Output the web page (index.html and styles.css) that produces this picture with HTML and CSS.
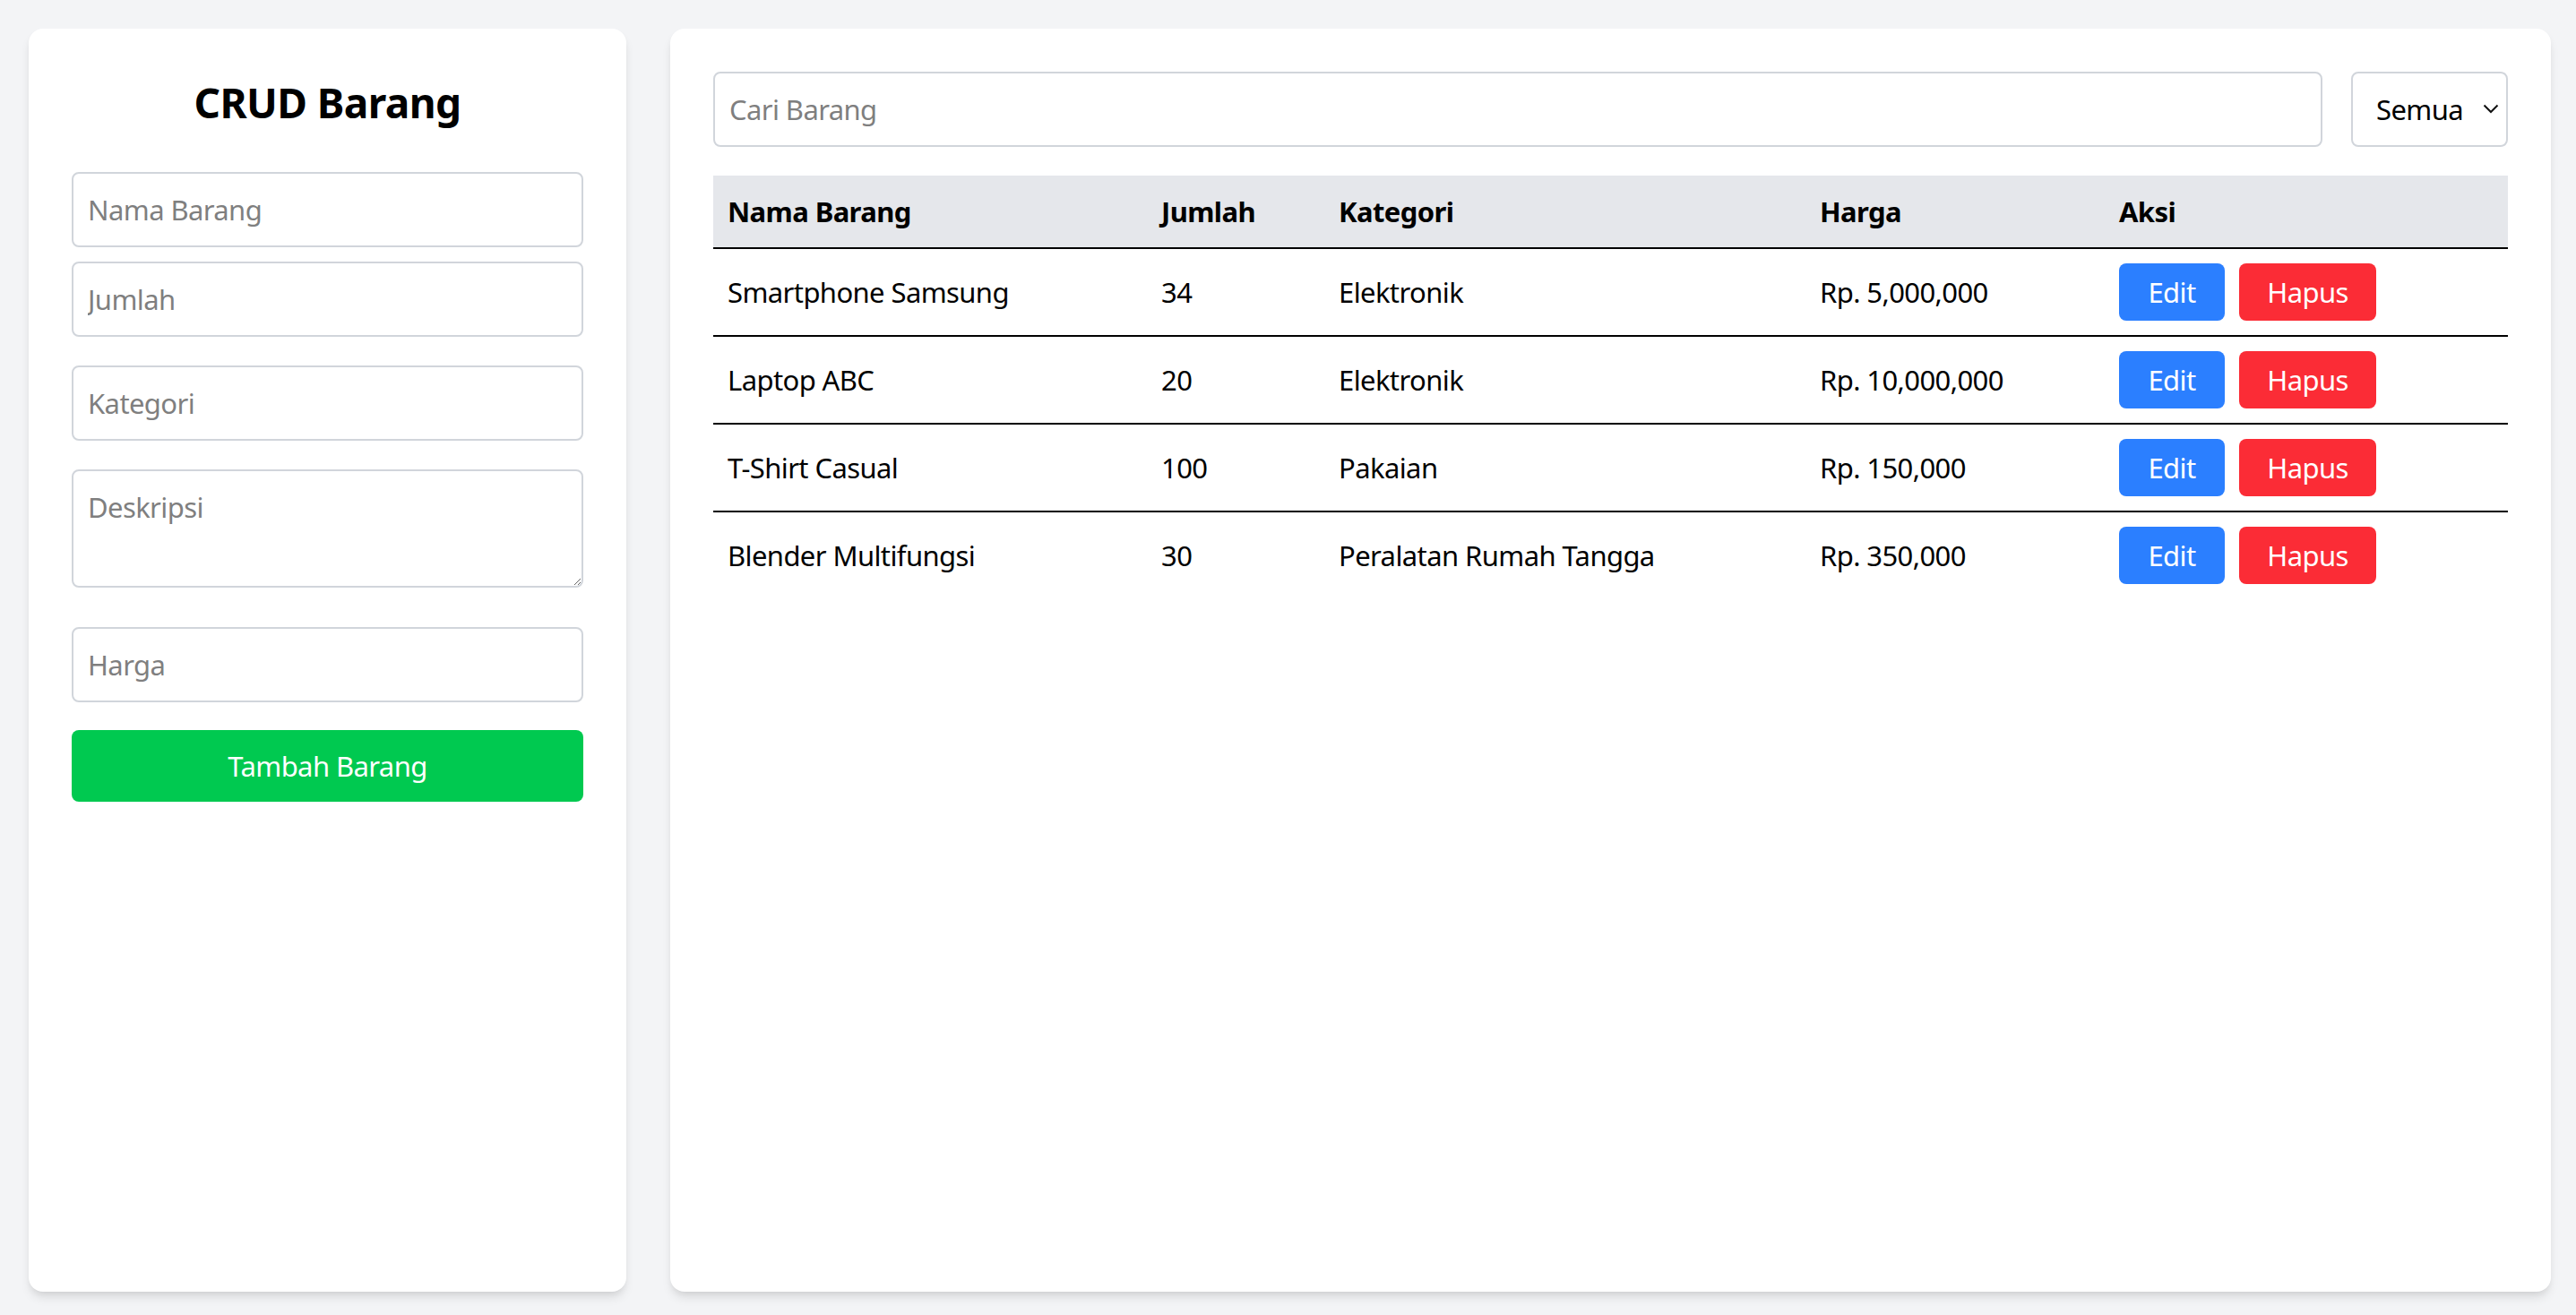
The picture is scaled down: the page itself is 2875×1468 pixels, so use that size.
FILE: index.html
```html
<!DOCTYPE html>
<html lang="id">
<head>
<meta charset="utf-8">
<title>CRUD Barang</title>
<link rel="stylesheet" href="styles.css">
</head>
<body>
<div class="layout">
  <aside class="card form-card">
    <h1 class="title">CRUD Barang</h1>
    <input class="field f-nama" type="text" placeholder="Nama Barang">
    <input class="field f-jumlah" type="number" placeholder="Jumlah">
    <input class="field f-kategori" type="text" placeholder="Kategori">
    <textarea class="field f-desk" rows="2" placeholder="Deskripsi"></textarea>
    <input class="field f-harga" type="number" placeholder="Harga">
    <button class="btn-add" type="button">Tambah Barang</button>
  </aside>
  <main class="card list-card">
    <div class="toolbar">
      <input class="field search" type="text" placeholder="Cari Barang">
      <div class="select-wrap">
        <select class="field select">
          <option>Semua</option>
          <option>Elektronik</option>
          <option>Pakaian</option>
          <option>Peralatan Rumah Tangga</option>
        </select>
        <svg class="chev" width="18" height="11" viewBox="0 0 18 11"><path d="M1.5 1.5 L9 9 L16.5 1.5" fill="none" stroke="#111" stroke-width="2"/></svg>
      </div>
    </div>
    <table class="tbl">
      <colgroup>
        <col class="c1"><col class="c2"><col class="c3"><col class="c4"><col class="c5">
      </colgroup>
      <thead>
        <tr><th>Nama Barang</th><th>Jumlah</th><th>Kategori</th><th>Harga</th><th>Aksi</th></tr>
      </thead>
      <tbody>
        <tr><td>Smartphone Samsung</td><td>34</td><td>Elektronik</td><td>Rp. 5,000,000</td><td><div class="actions"><button class="btn edit">Edit</button><button class="btn del">Hapus</button></div></td></tr>
        <tr><td>Laptop ABC</td><td>20</td><td>Elektronik</td><td>Rp. 10,000,000</td><td><div class="actions"><button class="btn edit">Edit</button><button class="btn del">Hapus</button></div></td></tr>
        <tr><td>T-Shirt Casual</td><td>100</td><td>Pakaian</td><td>Rp. 150,000</td><td><div class="actions"><button class="btn edit">Edit</button><button class="btn del">Hapus</button></div></td></tr>
        <tr><td>Blender Multifungsi</td><td>30</td><td>Peralatan Rumah Tangga</td><td>Rp. 350,000</td><td><div class="actions"><button class="btn edit">Edit</button><button class="btn del">Hapus</button></div></td></tr>
      </tbody>
    </table>
  </main>
</div>
</body>
</html>
```

FILE: styles.css
```css
* { box-sizing: border-box; }
html, body { margin: 0; padding: 0; }
body {
  background: #f3f4f6;
  font-family: "Noto Sans", "Open Sans", "Liberation Sans", sans-serif;
  font-size: 31px;
  letter-spacing: -0.6px;
  line-height: 48px;
  color: #000;
}
.layout {
  display: flex;
  gap: 49px;
  height: 100vh;
  padding: 32px 28px 26px 32px;
}
.card {
  background: #fff;
  border-radius: 16px;
  box-shadow: 0 8px 12px -2px rgba(0,0,0,0.1), 0 4px 8px -4px rgba(0,0,0,0.1);
  padding: 48px;
}
.form-card { width: 667px; flex: none; }
.list-card { flex: 1; min-width: 0; }
.title {
  margin: 0 0 48px;
  padding-top: 2px;
  height: 64px;
  font-size: 46px;
  letter-spacing: -0.6px;
  line-height: 64px;
  font-weight: 700;
  text-align: center;
}
.field {
  display: block;
  width: 100%;
  font: inherit;
  letter-spacing: inherit;
  color: #000;
  background: #fff;
  border: 2px solid #d1d5db;
  border-radius: 8px;
  padding: 16px;
  height: 84px;
  margin: 0;
  outline: none;
}
.field::placeholder { color: #7f7f7f; opacity: 1; }
input[type=number]::-webkit-inner-spin-button,
input[type=number]::-webkit-outer-spin-button { -webkit-appearance: none; margin: 0; }
.f-nama { margin-bottom: 16px; }
.f-jumlah { margin-bottom: 32px; }
.f-kategori { margin-bottom: 32px; }
.f-desk { height: 132px; resize: vertical; margin-bottom: 44px; }
.f-harga { margin-bottom: 31px; }
.btn-add {
  display: block;
  width: 100%;
  height: 80px;
  border: 0;
  border-radius: 8px;
  background: #00c950;
  color: #fff;
  font: inherit;
  letter-spacing: inherit;
  padding: 16px;
}
.toolbar {
  display: flex;
  gap: 32px;
  margin-bottom: 32px;
}
.search { flex: 1; }
.select-wrap { position: relative; width: 175px; flex: none; }
.select {
  -webkit-appearance: none;
  appearance: none;
  padding: 16px 16px 16px 26px;
}
.chev { position: absolute; right: 10px; top: 36px; pointer-events: none; }
.tbl {
  width: 100%;
  border-collapse: collapse;
  table-layout: fixed;
}
.c1 { width: 484px; }
.c2 { width: 198px; }
.c3 { width: 537px; }
.c4 { width: 334px; }
.c5 { width: 450px; }
.tbl thead tr { background: #e5e7eb; border-bottom: 2px solid #000; }
.tbl th {
  text-align: left;
  font-weight: 700;
  padding: 16px;
}
.tbl td { padding: 16px; vertical-align: middle; }
.tbl tbody tr { border-bottom: 2px solid #000; }
.tbl tbody tr:last-child { border-bottom: 0; }
.actions { display: flex; gap: 16px; }
.btn {
  font: inherit;
  letter-spacing: inherit;
  color: #fff;
  border: 0;
  border-radius: 8px;
  height: 64px;
  padding: 8px 0;
  text-align: center;
}
.edit { background: #2b7fff; width: 118px; }
.del { background: #fb2c36; width: 153px; }
```
